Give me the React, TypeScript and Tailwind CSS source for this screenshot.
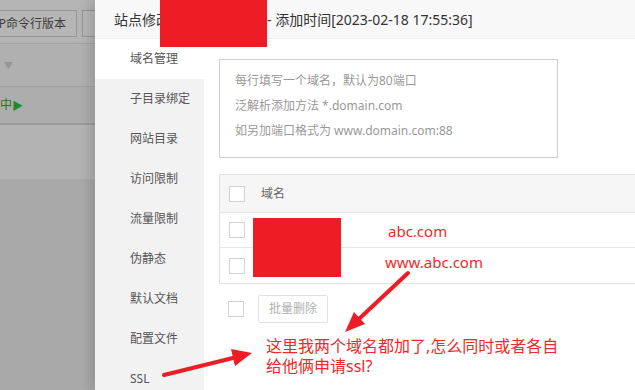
const font = "font-['Noto_Sans','Noto_Sans_CJK_SC',sans-serif]";

const menu = ['域名管理', '子目录绑定', '网站目录', '访问限制', '流量限制', '伪静态', '默认文档', '配置文件', 'SSL'];

function Box() {
  return <span className="block w-[16px] h-[16px] border border-[#d2d2d2] bg-white shrink-0" />;
}

function Arrows() {
  return (
    <svg className="absolute inset-0 pointer-events-none" width="635" height="390">
      <line x1="408" y1="273" x2="360" y2="318" stroke="#ee1c25" strokeWidth="4" strokeLinecap="round" />
      <polygon points="345,332 365,324 354,312" fill="#ee1c25" />
      <line x1="164" y1="375" x2="233" y2="358" stroke="#ee1c25" strokeWidth="4" strokeLinecap="round" />
      <polygon points="252,353 235,366 231,349" fill="#ee1c25" />
    </svg>
  );
}

export default function App() {
  return (
    <div className={`relative w-[635px] h-[390px] overflow-hidden flex bg-white ${font}`}>
      {/* dimmed page behind the dialog */}
      <div className="w-[95px] shrink-0 flex flex-col bg-[#a9a9a9] overflow-hidden">
        <div className="h-[43px] bg-[#b4b4b4] flex items-start pt-[10px] gap-[5px]">
          <div className="-ml-[6px] w-[83px] h-[27px] shrink-0 border border-[#959595] bg-[#b6b6b6] flex items-center justify-end pr-[10px] text-[12px] text-[#3c3c3c] leading-none">P命令行版本</div>
          <div className="w-[30px] h-[27px] shrink-0 border border-[#959595] bg-[#b6b6b6]" />
        </div>
        <div className="h-[43px] bg-[#b0b0b0] border-t border-[#a2a2a2] flex items-center pl-[4px]">
          <span className="text-[9px] text-[#969696] leading-none">▼</span>
        </div>
        <div className="h-[37px] bg-[#adadad] border-t border-[#a2a2a2] flex items-center">
          <span className="text-[12px] text-[#1f7a2a] leading-none">中</span>
          <span className="text-[11px] text-[#1f8a2a] leading-none">▶</span>
        </div>
        <div className="h-[56px] bg-[#b3b3b3] border-t-2 border-[#9c9c9c]" />
        <div className="flex-1 bg-[#a9a9a9]" />
      </div>

      {/* dialog */}
      <div className="flex-1 flex flex-col shadow-[-6px_0_10px_rgba(0,0,0,0.12)] bg-white">
        <div className="h-[39px] shrink-0 bg-[#f8f8f8] border-b border-[#eeeeee] flex items-center pl-[19px] text-[14px] text-[#333] whitespace-nowrap">
          <span className="w-[153px] overflow-hidden shrink-0">站点修改[abc.com]</span>
          <span>- 添加时间[2023-02-18 17:55:36]</span>
        </div>
        <div className="flex-1 flex">
          <div className="w-[109px] shrink-0 bg-[#f2f2f2] flex flex-col">
            {menu.map((item, index) => (
              <div key={index} className={`h-[40px] shrink-0 flex items-center pl-[35px] text-[12px] text-[#555] ${index === 0 ? 'bg-white text-[#333]' : ''}`}>
                {item}
              </div>
            ))}
          </div>
          <div className="flex-1 pl-[15px] pt-[20px]">
            <div className="w-[339px] h-[99px] border border-[#cfcfcf] pl-[15px] pt-[8px] text-[12px] leading-[25px] text-[#999]">
              <div>每行填写一个域名，默认为80端口</div>
              <div>泛解析添加方法 *.domain.com</div>
              <div>如另加端口格式为 www.domain.com:88</div>
            </div>
            <div className="mt-[16px] w-[440px] border border-[#e2e2e2]">
              <div className="h-[37px] bg-[#f6f6f6] flex items-center pl-[9px] gap-[16px] text-[12px] text-[#666]">
                <Box />
                <span>域名</span>
              </div>
              <div className="h-[35px] border-t border-[#e6e6e6] flex items-center pl-[9px]"><Box /></div>
              <div className="h-[36px] border-t border-[#e6e6e6] flex items-center pl-[9px]"><Box /></div>
            </div>
            <div className="mt-[11px] flex items-center pl-[9px] gap-[14px]">
              <Box />
              <button className="h-[28px] w-[70px] border border-[#e2e2e2] rounded-[2px] bg-white text-[12px] text-[#b0b0b0]">批量删除</button>
            </div>
          </div>
        </div>
      </div>

      {/* annotations */}
      <div className="absolute left-[160px] top-0 w-[107px] h-[47px] bg-[#ee1c25]" />
      <div className="absolute left-[253px] top-[218px] w-[88px] h-[59px] bg-[#ee1c25]" />
      <div className="absolute left-[388px] top-[220px] text-[15px] leading-[22px] text-[#ee2a2a]">abc.com</div>
      <div className="absolute left-[385px] top-[251px] text-[15px] leading-[22px] text-[#ee2a2a]">www.abc.com</div>
      <div className="absolute left-[266px] top-[336px] text-[16px] leading-[20px] text-[#ee2a2a]">
        <div>这里我两个域名都加了,怎么同时或者各自</div>
        <div>给他俩申请ssl?</div>
      </div>
      <Arrows />
    </div>
  );
}
